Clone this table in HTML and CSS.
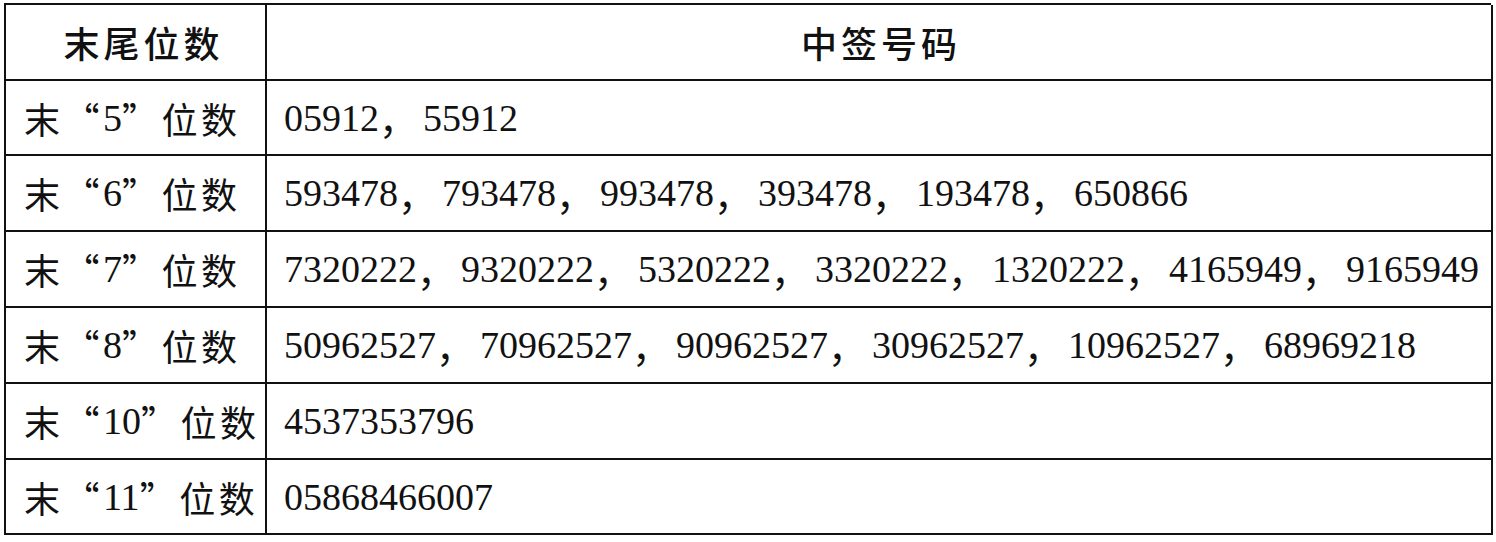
FILE: index.html
```html
<!DOCTYPE html>
<html lang="zh-CN">
<head>
<meta charset="utf-8">
<title>中签号码</title>
<link rel="stylesheet" href="styles.css">
</head>
<body>
<div class="table">
  <div class="cell head head-first">末尾位数</div>
  <div class="cell head">中签号码</div>

  <div class="cell label">末<span class="q">“</span><span class="num">5</span><span class="q">”</span>位数</div>
  <div class="cell nums">05912<span class="sep">，</span>55912</div>

  <div class="cell label">末<span class="q">“</span><span class="num">6</span><span class="q">”</span>位数</div>
  <div class="cell nums">593478<span class="sep">，</span>793478<span class="sep">，</span>993478<span class="sep">，</span>393478<span class="sep">，</span>193478<span class="sep">，</span>650866</div>

  <div class="cell label">末<span class="q">“</span><span class="num">7</span><span class="q">”</span>位数</div>
  <div class="cell nums">7320222<span class="sep">，</span>9320222<span class="sep">，</span>5320222<span class="sep">，</span>3320222<span class="sep">，</span>1320222<span class="sep">，</span>4165949<span class="sep">，</span>9165949</div>

  <div class="cell label">末<span class="q">“</span><span class="num">8</span><span class="q">”</span>位数</div>
  <div class="cell nums">50962527<span class="sep">，</span>70962527<span class="sep">，</span>90962527<span class="sep">，</span>30962527<span class="sep">，</span>10962527<span class="sep">，</span>68969218</div>

  <div class="cell label">末<span class="q">“</span><span class="num">10</span><span class="q">”</span>位数</div>
  <div class="cell nums">4537353796</div>

  <div class="cell label">末<span class="q">“</span><span class="num">11</span><span class="q">”</span>位数</div>
  <div class="cell nums">05868466007</div>
</div>
</body>
</html>
```
FILE: styles.css
```css
html, body {
  margin: 0;
  padding: 0;
  background: #ffffff;
}

.table {
  box-sizing: border-box;
  margin: 3px 0 0 4px;
  width: 1487px;
  display: grid;
  grid-template-columns: 261px 1226px;
  grid-template-rows: 76px 75px 76px 76px 76px 76px 75px;
  border-top: 2px solid #111;
  border-left: 2px solid #111;
  color: #111;
}

.cell {
  box-sizing: border-box;
  border-right: 2px solid #111;
  border-bottom: 2px solid #111;
  display: flex;
  align-items: center;
  white-space: nowrap;
  overflow: visible;
}

.head {
  justify-content: center;
  font-family: "Noto Sans CJK SC", sans-serif;
  font-weight: 500;
  font-size: 36px;
  letter-spacing: 4px;
  padding-left: 4px;
}

.head-first {
  padding-left: 16px;
}

.label {
  padding-left: 18px;
  font-family: "Noto Sans CJK SC", sans-serif;
  font-weight: 400;
  font-size: 36px;
  letter-spacing: 3.5px;
}

.label .num {
  font-family: "Liberation Serif", serif;
  font-size: 38px;
  letter-spacing: 0;
}

.nums {
  padding-left: 17px;
  font-family: "Liberation Serif", "Noto Sans CJK SC", serif;
  font-size: 38px;
}

.sep {
  font-family: "Noto Sans CJK SC", sans-serif;
  margin-right: 6px;
}
```
